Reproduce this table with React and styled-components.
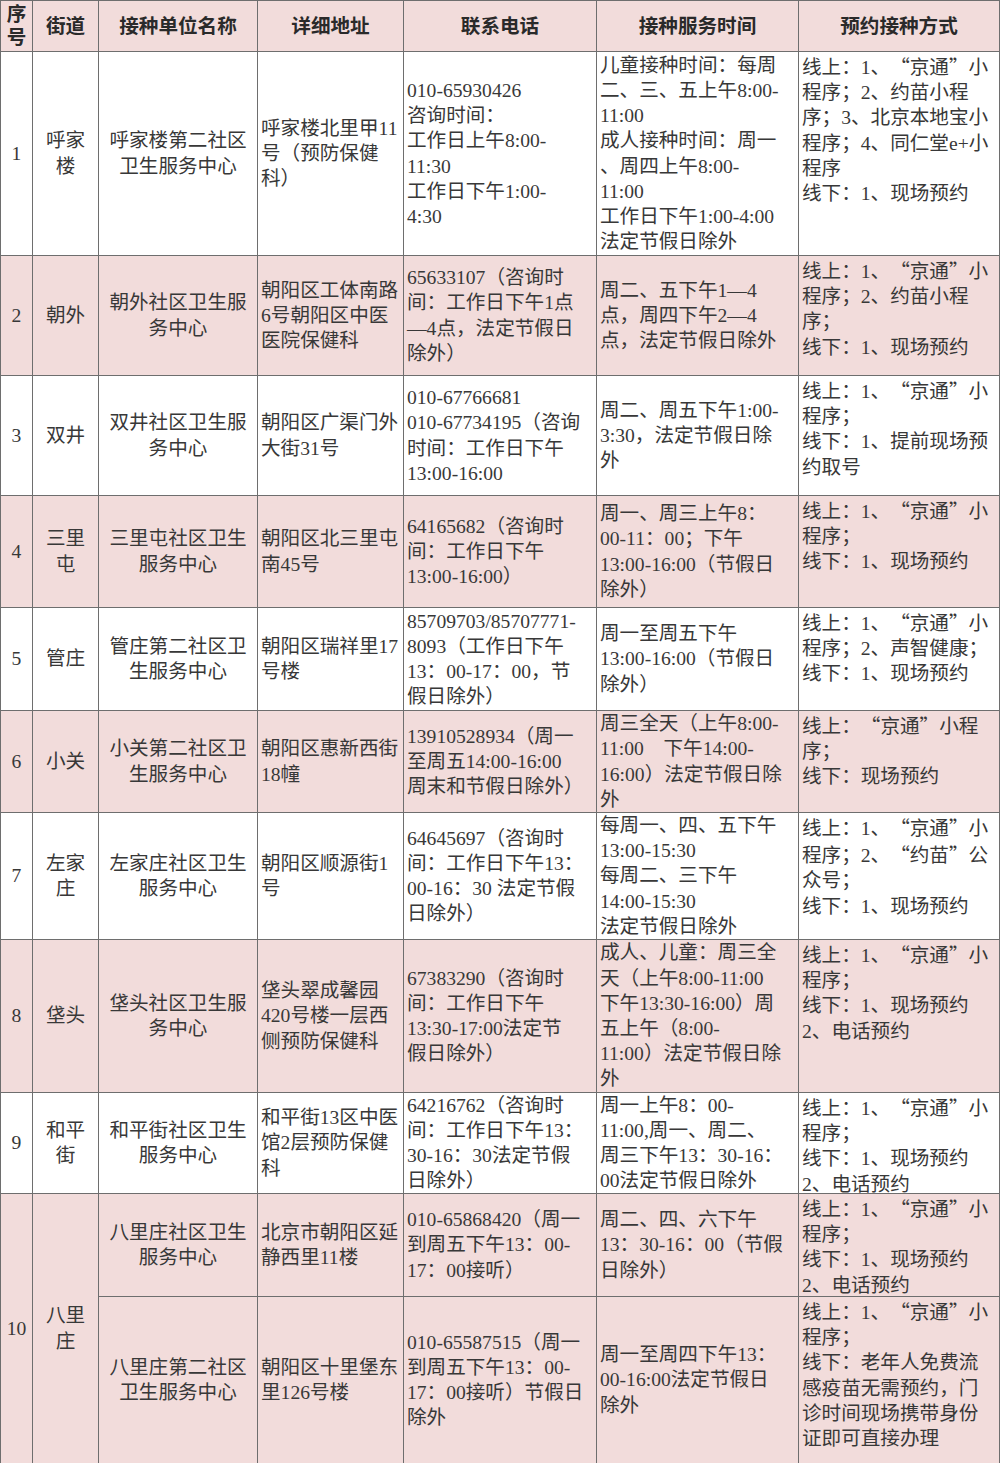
import React from 'react';
import styled, { createGlobalStyle } from 'styled-components';

const GlobalStyle = createGlobalStyle`
  html, body {
    margin: 0;
    padding: 0;
    background: #fff;
  }
  body {
    font-family: "Liberation Serif", "Noto Sans CJK SC", serif;
    color: #383838;
  }
`;

const LINE = '#6e6e6e';

const Sheet = styled.div`
  display: grid;
  grid-template-columns: 32px 66px 159px 146px 193px 202px 201px;
  grid-template-rows: ${p => p.$rows};
  width: 1000px;
  box-sizing: border-box;
  border-left: 1px solid ${LINE};
  border-top: 1px solid ${LINE};
  font-size: 19.6px;
  line-height: 25.2px;
`;

const Cell = styled.div`
  box-sizing: border-box;
  min-width: 0;
  border-right: 1px solid ${LINE};
  border-bottom: 1px solid ${LINE};
  background: ${p => (p.$pink ? '#f2dcdb' : '#ffffff')};
  display: flex;
  flex-direction: column;
  justify-content: ${p => (p.$top ? 'flex-start' : 'center')};
  align-items: ${p => (p.$center ? 'center' : 'flex-start')};
  text-align: ${p => (p.$center ? 'center' : 'left')};
  padding: ${p => (p.$top ? '1px' : '0')} 0 0 ${p => (p.$center ? '0' : '3px')};
  grid-row: ${p => (p.$span ? `span ${p.$span}` : 'auto')};
`;

const HeadCell = styled(Cell)`
  font-weight: 700;
  color: #2a2a2a;
  line-height: 23px;
`;

const Line = styled.div`
  white-space: pre;
`;

const Quote = styled.span`
  display: inline-block;
  width: 1em;
  font-family: "Noto Sans CJK SC", sans-serif;
  text-align: ${p => (p.$open ? 'right' : 'left')};
`;

const withQuotes = text =>
  text.split(/([“”])/).map((part, i) =>
    part === '“' || part === '”' ? (
      <Quote key={i} $open={part === '“'}>{part}</Quote>
    ) : (
      part
    )
  );

const Lines = ({ items }) =>
  items.map((t, i) => <Line key={i}>{withQuotes(t)}</Line>);

const headers = [['序', '号'], ['街道'], ['接种单位名称'], ['详细地址'], ['联系电话'], ['接种服务时间'], ['预约接种方式']];

const ONLINE = '线上：1、“京通”小';

const rows = [
  {
    n: '1', street: ['呼家', '楼'], h: 204, pink: false,
    name: ['呼家楼第二社区', '卫生服务中心'],
    addr: ['呼家楼北里甲11', '号（预防保健', '科）'],
    phone: ['010-65930426', '咨询时间：', '工作日上午8:00-', '11:30', '工作日下午1:00-', '4:30'],
    time: ['儿童接种时间：每周', '二、三、五上午8:00-', '11:00', '成人接种时间：周一', '、周四上午8:00-', '11:00', '工作日下午1:00-4:00', '法定节假日除外'],
    way: [ONLINE, '程序；2、约苗小程', '序；3、北京本地宝小', '程序；4、同仁堂e+小', '程序', '线下：1、现场预约'],
  },
  {
    n: '2', street: ['朝外'], h: 120, pink: true,
    name: ['朝外社区卫生服', '务中心'],
    addr: ['朝阳区工体南路', '6号朝阳区中医', '医院保健科'],
    phone: ['65633107（咨询时', '间：工作日下午1点', '—4点，法定节假日', '除外）'],
    time: ['周二、五下午1—4', '点，周四下午2—4', '点，法定节假日除外'],
    way: [ONLINE, '程序；2、约苗小程', '序；', '线下：1、现场预约'],
  },
  {
    n: '3', street: ['双井'], h: 120, pink: false,
    name: ['双井社区卫生服', '务中心'],
    addr: ['朝阳区广渠门外', '大街31号'],
    phone: ['010-67766681', '010-67734195（咨询', '时间：工作日下午', '13:00-16:00'],
    time: ['周二、周五下午1:00-', '3:30，法定节假日除', '外'],
    way: [ONLINE, '程序；', '线下：1、提前现场预', '约取号'],
  },
  {
    n: '4', street: ['三里', '屯'], h: 112, pink: true,
    name: ['三里屯社区卫生', '服务中心'],
    addr: ['朝阳区北三里屯', '南45号'],
    phone: ['64165682（咨询时', '间：工作日下午', '13:00-16:00）'],
    time: ['周一、周三上午8：', '00-11：00；下午', '13:00-16:00（节假日', '除外）'],
    way: [ONLINE, '程序；', '线下：1、现场预约'],
  },
  {
    n: '5', street: ['管庄'], h: 103, pink: false,
    name: ['管庄第二社区卫', '生服务中心'],
    addr: ['朝阳区瑞祥里17', '号楼'],
    phone: ['85709703/85707771-', '8093（工作日下午', '13：00-17：00，节', '假日除外）'],
    time: ['周一至周五下午', '13:00-16:00（节假日', '除外）'],
    way: [ONLINE, '程序；2、声智健康；', '线下：1、现场预约'],
  },
  {
    n: '6', street: ['小关'], h: 102, pink: true,
    name: ['小关第二社区卫', '生服务中心'],
    addr: ['朝阳区惠新西街', '18幢'],
    phone: ['13910528934（周一', '至周五14:00-16:00', '周末和节假日除外）'],
    time: ['周三全天（上午8:00-', '11:00　下午14:00-', '16:00）法定节假日除', '外'],
    way: ['线上：“京通”小程', '序；', '线下：现场预约'],
  },
  {
    n: '7', street: ['左家', '庄'], h: 127, pink: false,
    name: ['左家庄社区卫生', '服务中心'],
    addr: ['朝阳区顺源街1', '号'],
    phone: ['64645697（咨询时', '间：工作日下午13：', '00-16：30 法定节假', '日除外）'],
    time: ['每周一、四、五下午', '13:00-15:30', '每周二、三下午', '14:00-15:30', '法定节假日除外'],
    way: [ONLINE, '程序；2、“约苗”公', '众号；', '线下：1、现场预约'],
  },
  {
    n: '8', street: ['垡头'], h: 153, pink: true,
    name: ['垡头社区卫生服', '务中心'],
    addr: ['垡头翠成馨园', '420号楼一层西', '侧预防保健科'],
    phone: ['67383290（咨询时', '间：工作日下午', '13:30-17:00法定节', '假日除外）'],
    time: ['成人、儿童：周三全', '天（上午8:00-11:00', '下午13:30-16:00）周', '五上午（8:00-', '11:00）法定节假日除', '外'],
    way: [ONLINE, '程序；', '线下：1、现场预约', '2、电话预约'],
  },
  {
    n: '9', street: ['和平', '街'], h: 101, pink: false,
    name: ['和平街社区卫生', '服务中心'],
    addr: ['和平街13区中医', '馆2层预防保健', '科'],
    phone: ['64216762（咨询时', '间：工作日下午13：', '30-16：30法定节假', '日除外）'],
    time: ['周一上午8：00-', '11:00,周一、周二、', '周三下午13：30-16：', '00法定节假日除外'],
    way: [ONLINE, '程序；', '线下：1、现场预约', '2、电话预约'],
  },
  {
    n: '10', street: ['八里', '庄'], h: 103, pink: true, span: 2,
    name: ['八里庄社区卫生', '服务中心'],
    addr: ['北京市朝阳区延', '静西里11楼'],
    phone: ['010-65868420（周一', '到周五下午13：00-', '17：00接听）'],
    time: ['周二、四、六下午', '13：30-16：00（节假', '日除外）'],
    way: [ONLINE, '程序；', '线下：1、现场预约', '2、电话预约'],
  },
  {
    h: 167, pink: true, continued: true,
    name: ['八里庄第二社区', '卫生服务中心'],
    addr: ['朝阳区十里堡东', '里126号楼'],
    phone: ['010-65587515（周一', '到周五下午13：00-', '17：00接听）节假日', '除外'],
    time: ['周一至周四下午13：', '00-16:00法定节假日', '除外'],
    way: [ONLINE, '程序；', '线下：老年人免费流', '感疫苗无需预约，门', '诊时间现场携带身份', '证即可直接办理'],
  },
];

const Row = ({ r }) => (
  <>
    {!r.continued && (
      <>
        <Cell $pink={r.pink} $center $span={r.span}>{r.n}</Cell>
        <Cell $pink={r.pink} $center $span={r.span}><Lines items={r.street} /></Cell>
      </>
    )}
    <Cell $pink={r.pink} $center><Lines items={r.name} /></Cell>
    <Cell $pink={r.pink}><Lines items={r.addr} /></Cell>
    <Cell $pink={r.pink}><Lines items={r.phone} /></Cell>
    <Cell $pink={r.pink}><Lines items={r.time} /></Cell>
    <Cell $pink={r.pink} $top><Lines items={r.way} /></Cell>
  </>
);

export default function App() {
  const template = ['51px', ...rows.map(r => `${r.h}px`)].join(' ');
  return (
    <>
      <GlobalStyle />
      <Sheet $rows={template}>
        {headers.map((h, i) => (
          <HeadCell key={i} $pink $center><Lines items={h} /></HeadCell>
        ))}
        {rows.map((r, i) => (
          <Row key={i} r={r} />
        ))}
      </Sheet>
    </>
  );
}
